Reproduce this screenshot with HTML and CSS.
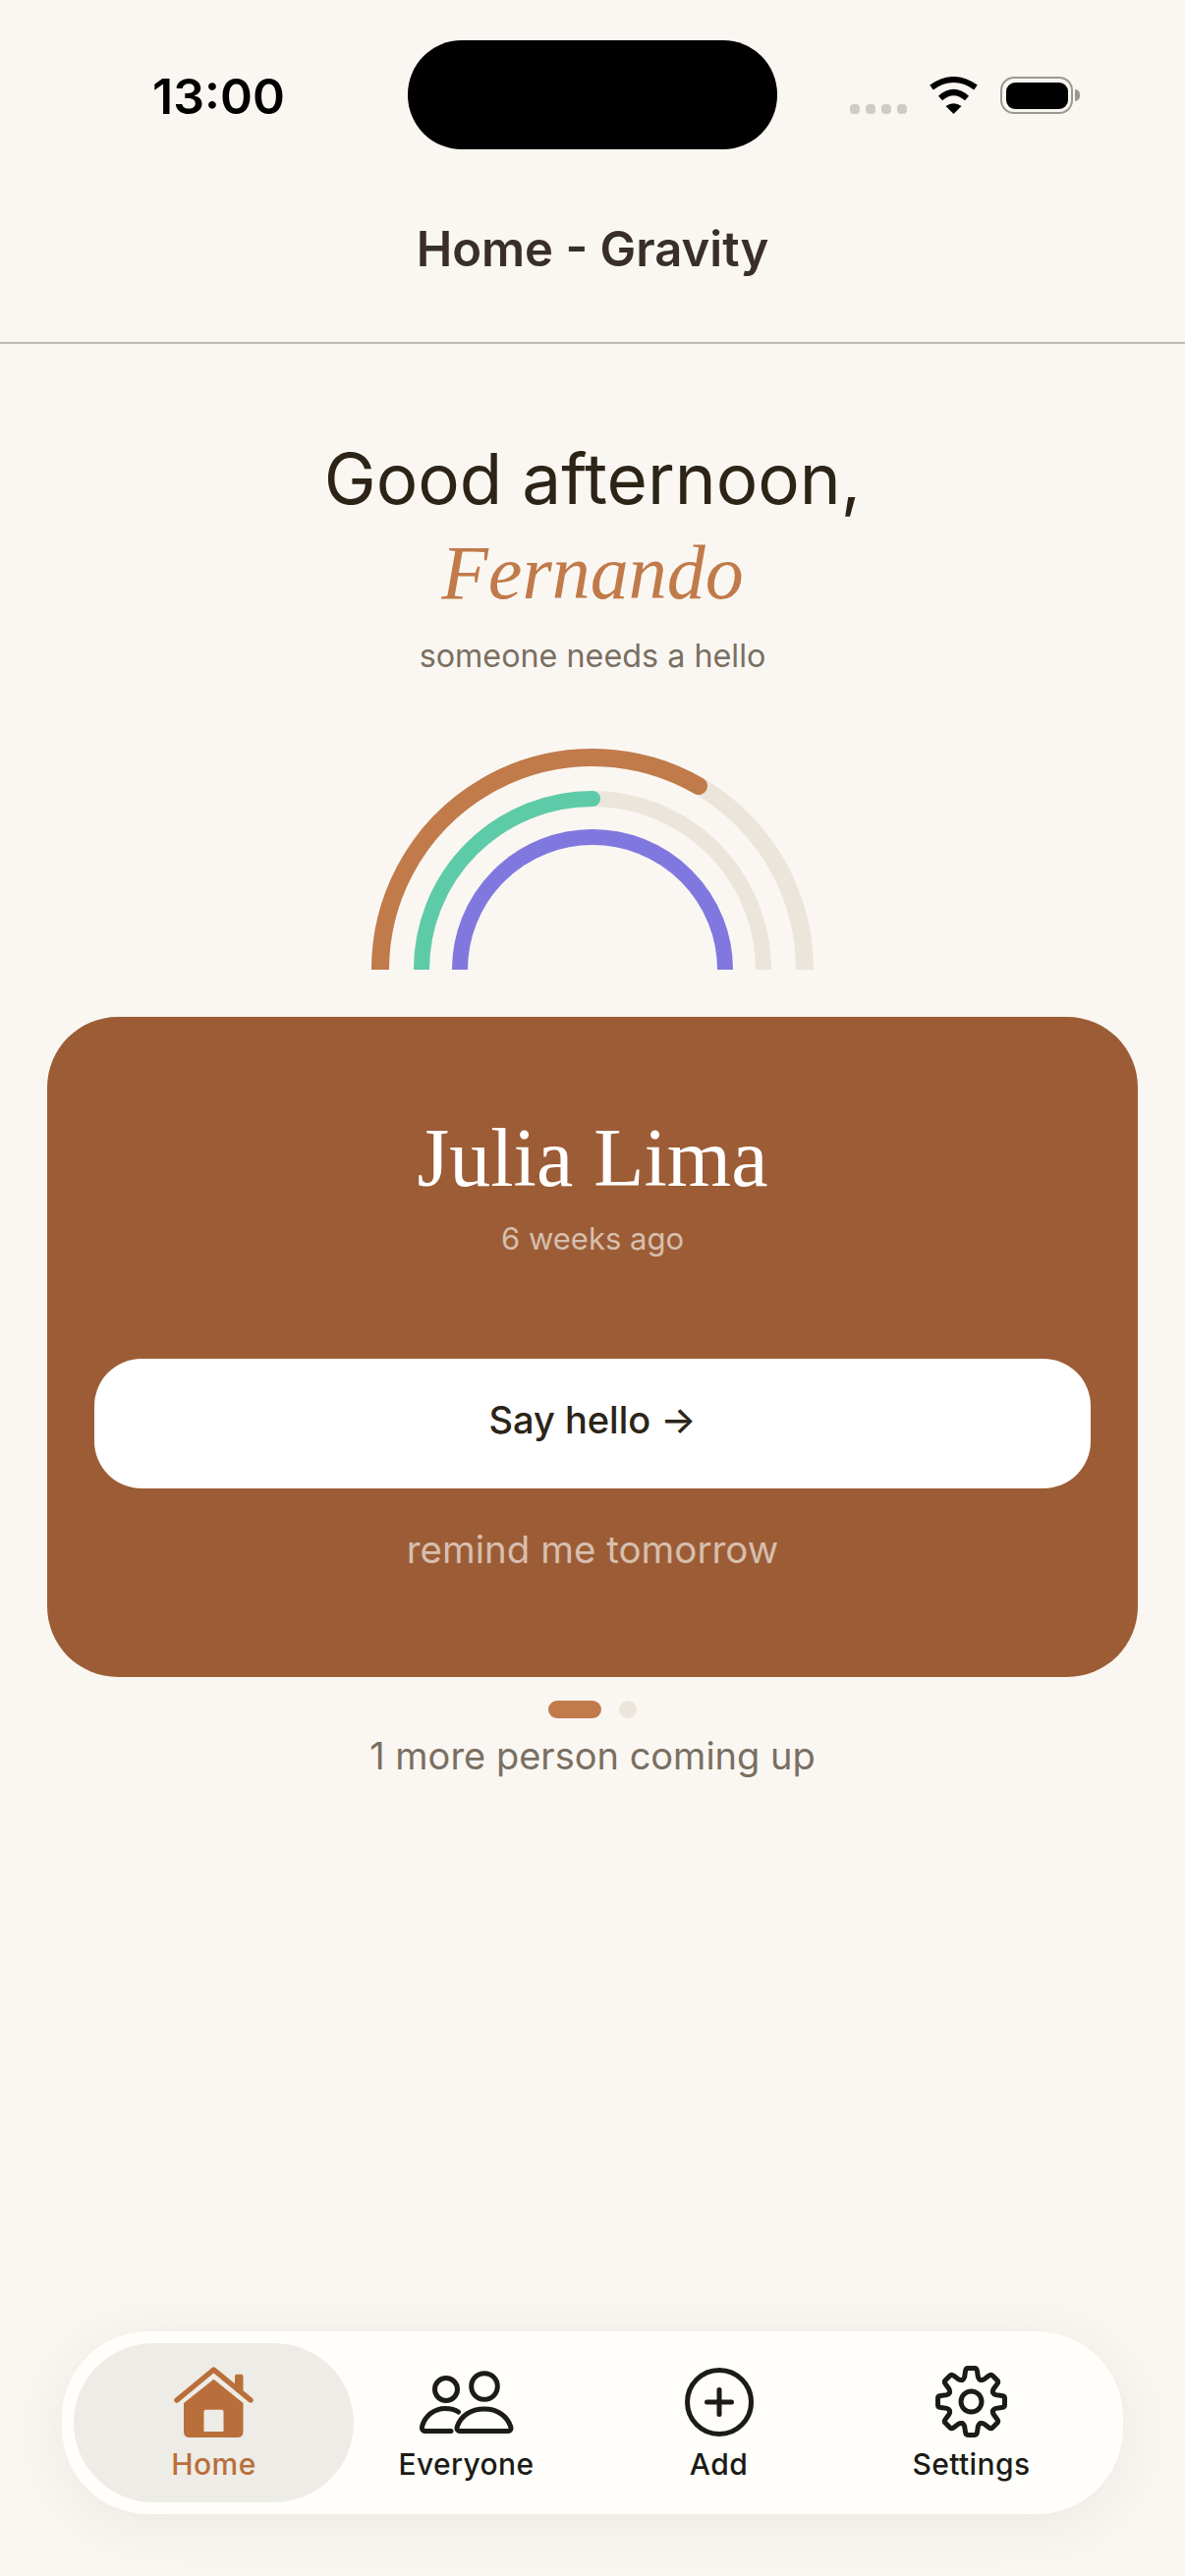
FILE: index.html
```html
<!DOCTYPE html>
<html lang="en">
<head>
    <meta charset="UTF-8">
    <title>Home - Gravity</title>
    <link rel="stylesheet" href="styles.css">
</head>
<body>
    <div class="header">
        <div class="status-bar">
            <div class="clock">13:00</div>
            <div class="island"></div>
            <div class="status-icons">
                <div class="signal"><span></span><span></span><span></span><span></span></div>
                <svg class="wifi" viewBox="0 0 51 38">
                    <path d="M3 11Q25.5-5 48 11M12 22Q25.5 10 39 22" fill="none" stroke="#000" stroke-width="6"/>
                    <path d="M17.5 30Q25.5 24.5 33.5 30L25.5 38Z" fill="#000"/>
                </svg>
                <div class="battery"><div class="battery-level"></div></div>
                <div class="battery-cap"></div>
            </div>
        </div>
        <h1 class="title">Home - Gravity</h1>
    </div>

    <div class="content">
        <p class="greeting">Good afternoon,</p>
        <p class="user-name">Fernando</p>
        <p class="subtitle">someone needs a hello</p>

        <svg class="rainbow" viewBox="0 0 450 225">
            <path class="track" d="M9 225A216 216 0 0 1 441 225"/>
            <path class="arc arc-brown" d="M9 225A216 216 0 0 1 333 38"/>
            <path class="track track-thin" d="M51 225A174 174 0 0 1 399 225"/>
            <path class="arc arc-green" d="M51 225A174 174 0 0 1 225 51"/>
            <path class="arc arc-purple" d="M90 225A135 135 0 0 1 360 225"/>
        </svg>

        <div class="person-card">
            <div class="person-name">Julia Lima</div>
            <div class="person-when">6 weeks ago</div>
            <button class="hello-btn">Say hello <span class="arrow">→</span></button>
            <div class="remind">remind me tomorrow</div>
        </div>

        <div class="pager">
            <span class="pager-current"></span>
            <span class="pager-dot"></span>
        </div>
        <p class="coming-up">1 more person coming up</p>
    </div>

    <div class="tab-bar">
        <div class="tab active">
            <svg class="tab-icon icon-home" viewBox="0 0 81 72">
                <path d="M3 34L40.500 3L78 34" fill="none" stroke="#B96F3B" stroke-width="5.500" stroke-linecap="round" stroke-linejoin="round"/>
                <path d="M62 24V9.500Q62 7.700 64 7.700H68.500Q70.500 7.700 70.500 9.500V30Z" fill="#B96F3B"/>
                <path fill-rule="evenodd" d="M40.500 12.700L70.500 37V66Q70.500 72 64.500 72H16Q10 72 10 66V37ZM32.500 43.700Q30.500 43.700 30.500 45.700V66H50.500V45.700Q50.500 43.700 48.500 43.700Z" fill="#B96F3B"/>
            </svg>
            <span class="tab-label">Home</span>
        </div>
        <div class="tab">
            <svg class="tab-icon icon-everyone" viewBox="0 0 96 64">
                <g fill="none" stroke="#1C1B17" stroke-width="5" stroke-linecap="round" stroke-linejoin="round">
                    <circle cx="66" cy="16" r="13.300"/>
                    <circle cx="27" cy="19" r="11.500"/>
                    <path d="M41 61.500H90C93 61.500 93.500 59 92.500 56.500C89 46 79 39 66 39C52 39 42 46 38.500 56.500C37.500 59 38 61.500 41 61.500Z"/>
                    <path d="M32 61.500H6C3 61.500 2 59 2.700 56.500C5.500 46 15 38.500 26 38.500C31 38.500 36 39.500 39.500 42"/>
                </g>
            </svg>
            <span class="tab-label">Everyone</span>
        </div>
        <div class="tab">
            <svg class="tab-icon icon-add" viewBox="0 0 70 70">
                <g fill="none" stroke="#1C1B17" stroke-width="5" stroke-linecap="round">
                    <circle cx="35" cy="35" r="32.500"/>
                    <path d="M22.500 35H47.500M35 22.500V47.500"/>
                </g>
            </svg>
            <span class="tab-label">Add</span>
        </div>
        <div class="tab">
            <svg class="tab-icon icon-settings" viewBox="-36.500 -36.500 73 73">
                <defs>
                    <path id="gear-tooth" d="M-9.180-22.170Q-7.400-23-6.900-25L-6-31Q-5.600-34-3.400-34H3.400Q5.600-34 6-31L6.900-25Q7.400-23 9.180-22.170"/>
                </defs>
                <g fill="none" stroke="#1C1B17" stroke-width="5" stroke-linecap="round">
                    <use href="#gear-tooth"/>
                    <use href="#gear-tooth" transform="rotate(45)"/>
                    <use href="#gear-tooth" transform="rotate(90)"/>
                    <use href="#gear-tooth" transform="rotate(135)"/>
                    <use href="#gear-tooth" transform="rotate(180)"/>
                    <use href="#gear-tooth" transform="rotate(225)"/>
                    <use href="#gear-tooth" transform="rotate(270)"/>
                    <use href="#gear-tooth" transform="rotate(315)"/>
                    <circle r="10.500"/>
                </g>
            </svg>
            <span class="tab-label">Settings</span>
        </div>
    </div>
</body>
</html>
```

FILE: styles.css
```css
* {
    margin: 0;
    padding: 0;
    box-sizing: border-box;
}

body {
    width: 1206px;
    height: 2622px;
    font-family: Inter, "Noto Sans", sans-serif;
    background: #FAF7F2;
    display: flex;
    flex-direction: column;
    overflow: hidden;
}

.header {
    height: 350px;
    padding-top: 41px;
    border-bottom: 2px solid #BDB9B2;
}

.status-bar {
    display: grid;
    grid-template-columns: 415px 376px 415px;
    height: 111px;
}

.clock {
    padding-left: 155px;
    padding-top: 26px;
    font-size: 50px;
    line-height: 62px;
    font-weight: 600;
    color: #000;
}

.island {
    background: #000;
    border-radius: 55px;
}

.status-icons {
    display: flex;
    align-items: flex-start;
    padding-left: 74px;
    padding-top: 37px;
}

.signal {
    display: flex;
    gap: 6px;
    margin-top: 28px;
    margin-right: 22px;
}

.signal span {
    width: 10px;
    height: 10px;
    border-radius: 4px;
    background: #CFCCC6;
}

.wifi {
    width: 51px;
    height: 38px;
    margin-right: 22px;
}

.battery {
    width: 74px;
    height: 38px;
    padding: 3.500px;
    border: 2.500px solid #9B9890;
    border-radius: 14px;
}

.battery-level {
    height: 100%;
    background: #000;
    border-radius: 9px;
}

.battery-cap {
    width: 5px;
    height: 12px;
    margin-top: 13px;
    margin-left: 2px;
    background: #9B9890;
    border-radius: 0 6px 6px 0;
}

.title {
    margin-top: 72px;
    text-align: center;
    font-size: 49px;
    line-height: 60px;
    font-weight: 600;
    color: #3A2F28;
}

.content {
    flex: 1;
    display: flex;
    flex-direction: column;
    align-items: center;
    padding: 90px 48px 0;
}

.greeting {
    font-size: 71px;
    line-height: 95px;
    font-weight: 400;
    color: #2C2416;
}

.user-name {
    font-family: "Liberation Serif", serif;
    font-style: italic;
    font-size: 78px;
    line-height: 96px;
    color: #C17A4A;
}

.subtitle {
    margin-top: 15px;
    font-size: 32.300px;
    line-height: 44px;
    color: #7A6F62;
}

.rainbow {
    display: block;
    width: 450px;
    height: 225px;
    margin-top: 72px;
    fill: none;
    stroke-width: 16px;
}

.track {
    stroke: #EBE5DB;
    stroke-width: 18px;
}

.track-thin {
    stroke-width: 16px;
}

.arc {
    stroke-linecap: round;
}

.arc-brown {
    stroke: #C17A4A;
    stroke-width: 18px;
}

.arc-green {
    stroke: #5ECBA8;
}

.arc-purple {
    stroke: #8178DF;
    stroke-linecap: butt;
}

.person-card {
    width: 100%;
    height: 672px;
    margin-top: 48px;
    padding: 94px 48px 0;
    background: #9C5D36;
    border-radius: 72px;
    display: flex;
    flex-direction: column;
    align-items: center;
}

.person-name {
    font-family: "Liberation Serif", serif;
    font-size: 84px;
    line-height: 100px;
    color: #FFFFFF;
}

.person-when {
    margin-top: 10px;
    font-size: 31px;
    line-height: 44px;
    color: #D7BEAF;
}

.hello-btn {
    width: 100%;
    height: 132px;
    margin-top: 100px;
    padding-bottom: 9px;
    background: #FFFFFF;
    border: none;
    border-radius: 48px;
    font-family: inherit;
    font-size: 38px;
    font-weight: 500;
    color: #2C2416;
}

.remind {
    margin-top: 37px;
    font-size: 38.500px;
    line-height: 50px;
    color: #D7BEAF;
}

.pager {
    display: flex;
    gap: 18px;
    margin-top: 24px;
}

.pager-current {
    width: 54px;
    height: 18px;
    border-radius: 9px;
    background: #C17A4A;
}

.pager-dot {
    width: 18px;
    height: 18px;
    border-radius: 50%;
    background: #EBE5DB;
}

.coming-up {
    margin-top: 13px;
    font-size: 38px;
    line-height: 50px;
    color: #7A6F62;
}

.tab-bar {
    display: flex;
    height: 186px;
    margin: 0 63px 63px;
    padding: 12px;
    background: #FFFEFA;
    border-radius: 88px;
    box-shadow: 0 10px 60px rgba(60,50,40,0.08);
}

.tab {
    flex: none;
    width: 285px;
    margin-left: -28px;
    border-radius: 81px;
    display: flex;
    flex-direction: column;
    align-items: center;
    position: relative;
}

.tab:first-child {
    margin-left: 0;
}

.tab.active {
    background: #EEECE6;
}

.tab-icon {
    display: block;
    position: absolute;
}

.icon-home {
    width: 81px;
    height: 72px;
    top: 24px;
}

.icon-everyone {
    width: 96px;
    height: 64px;
    top: 28px;
}

.icon-add {
    width: 70px;
    height: 70px;
    top: 25px;
}

.icon-settings {
    width: 73px;
    height: 73px;
    top: 23px;
}

.tab-label {
    margin-top: 103px;
    font-size: 30px;
    line-height: 40px;
    font-weight: 450;
    letter-spacing: 0.400px;
    color: #1C1B17;
}

.tab.active .tab-label {
    color: #B96F3B;
}
```
